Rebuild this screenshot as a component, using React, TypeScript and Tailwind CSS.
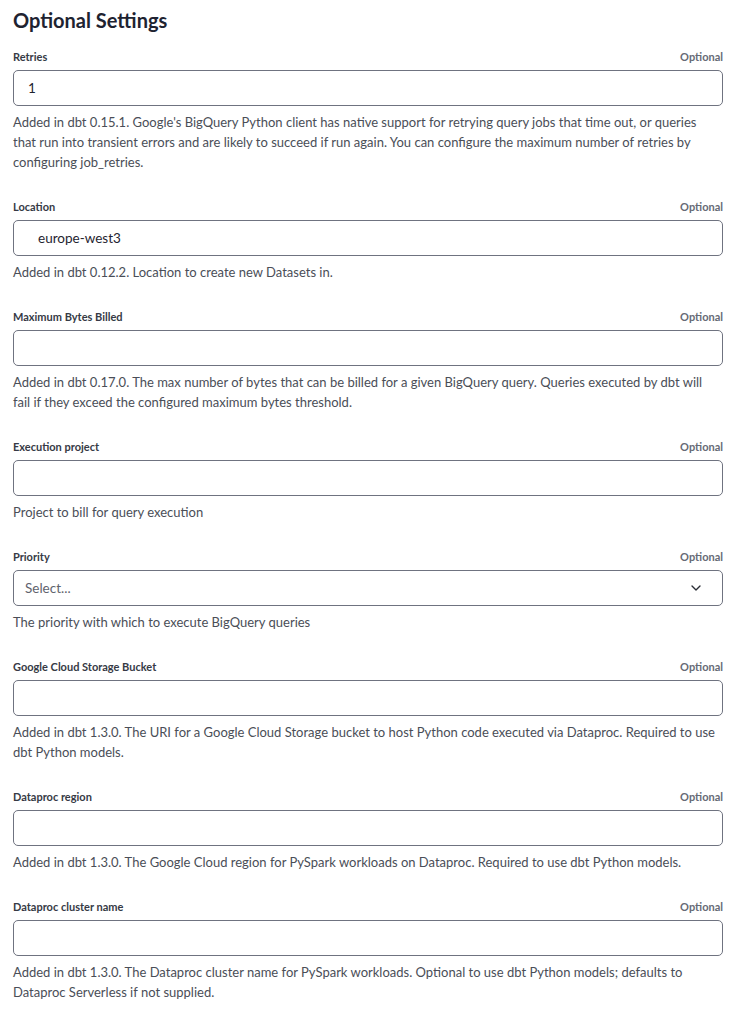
import React from "react";
import { ChevronDown } from "lucide-react";

type Field = {
  label: string;
  help: string;
  value?: string;
  valueClass?: string;
  select?: boolean;
};

// line breaks follow the reference wrapping
const fields: Field[] = [
  {
    label: "Retries",
    value: "1",
    valueClass: "pl-[14px]",
    help: "Added in dbt 0.15.1. Google's BigQuery Python client has native support for retrying query jobs that time out, or queries\nthat run into transient errors and are likely to succeed if run again. You can configure the maximum number of retries by\nconfiguring job_retries.",
  },
  {
    label: "Location",
    value: "europe-west3",
    valueClass: "pl-[24px]",
    help: "Added in dbt 0.12.2. Location to create new Datasets in.",
  },
  {
    label: "Maximum Bytes Billed",
    help: "Added in dbt 0.17.0. The max number of bytes that can be billed for a given BigQuery query. Queries executed by dbt will\nfail if they exceed the configured maximum bytes threshold.",
  },
  {
    label: "Execution project",
    help: "Project to bill for query execution",
  },
  {
    label: "Priority",
    select: true,
    help: "The priority with which to execute BigQuery queries",
  },
  {
    label: "Google Cloud Storage Bucket",
    help: "Added in dbt 1.3.0. The URI for a Google Cloud Storage bucket to host Python code executed via Dataproc. Required to use\ndbt Python models.",
  },
  {
    label: "Dataproc region",
    help: "Added in dbt 1.3.0. The Google Cloud region for PySpark workloads on Dataproc. Required to use dbt Python models.",
  },
  {
    label: "Dataproc cluster name",
    help: "Added in dbt 1.3.0. The Dataproc cluster name for PySpark workloads. Optional to use dbt Python models; defaults to\nDataproc Serverless if not supplied.",
  },
];

const FieldBlock = ({ field }: { field: Field }) => {
  return (
    <div className="flex flex-col">
      <div className="flex h-4 items-center justify-between text-[11px] font-bold">
        <span className="text-[#363a45]">{field.label}</span>
        <span className="text-[#666a75]">Optional</span>
      </div>
      {field.select ? (
        <div className="mt-[5px] flex h-9 items-center justify-between rounded-[5px] border border-[#6f7380] pl-[11px] pr-[18px] text-[13.5px] text-[#5f636d]">
          <span>Select...</span>
          <ChevronDown className="h-4 w-4 text-[#2a2d35]" strokeWidth={2} />
        </div>
      ) : (
        <div
          className={
            "mt-[5px] flex h-9 items-center rounded-[5px] border border-[#6f7380] text-[13.5px] text-[#1f2430] " +
            (field.valueClass ?? "")
          }
        >
          {field.value}
        </div>
      )}
      <p className="mt-1.5 whitespace-pre-line text-[13px] leading-5 text-[#4a4e57]">{field.help}</p>
    </div>
  );
};

export default function App() {
  return (
    <div className="min-h-screen bg-white pt-1.5 pl-[13px] font-['Lato','Noto_Sans',sans-serif]">
      <div className="w-[710px]">
        <h2 className="mb-[15px] text-[20px] font-bold leading-7 text-[#1e2331]">Optional Settings</h2>
        <div className="flex flex-col gap-[27px]">
          {fields.map((f) => (
            <FieldBlock key={f.label} field={f} />
          ))}
        </div>
      </div>
    </div>
  );
}
